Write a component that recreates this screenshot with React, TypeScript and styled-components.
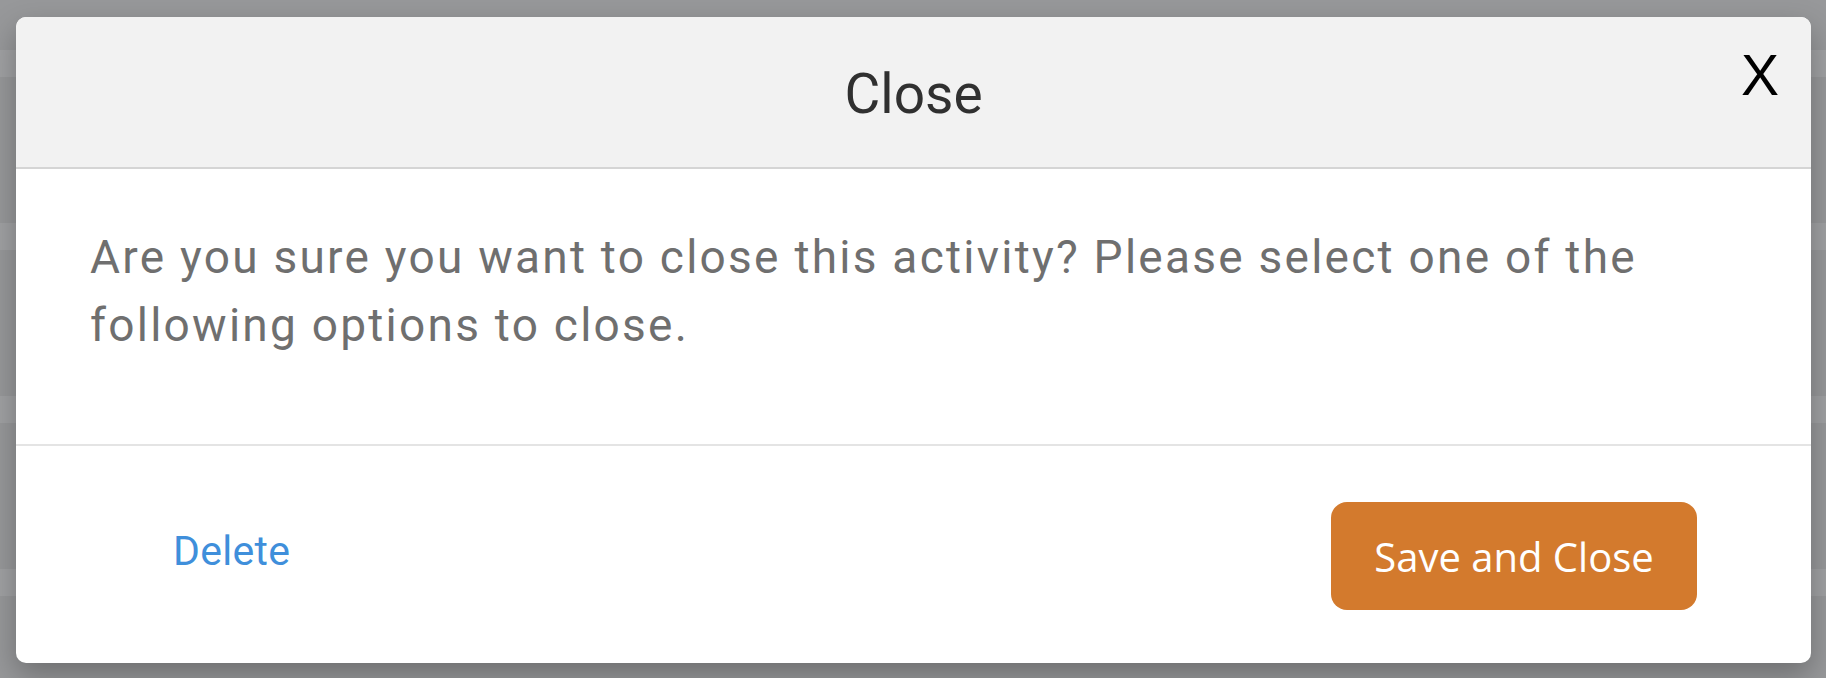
import React from "react";
import styled, { createGlobalStyle } from "styled-components";

const GlobalStyle = createGlobalStyle`
  html, body {
    margin: 0;
    padding: 0;
    height: 100%;
  }
  body {
    background: #97989a;
    font-family: Roboto, "Noto Sans", sans-serif;
  }
  #root {
    height: 100%;
  }
`;

/* Dimmed page behind the modal: faint table rows showing through the overlay */
const Backdrop = styled.div`
  box-sizing: border-box;
  height: 678px;
  padding: 17px 15px 15px 16px;
  background-color: #97989a;
  background-image: repeating-linear-gradient(
    to bottom,
    transparent 0px,
    transparent 50px,
    rgba(255, 255, 255, 0.09) 50px,
    rgba(255, 255, 255, 0.09) 77px,
    transparent 77px,
    transparent 173px
  );
`;

const Dialog = styled.section`
  box-sizing: border-box;
  display: flex;
  flex-direction: column;
  width: 1795px;
  height: 646px;
  background: #ffffff;
  border-radius: 10px;
  overflow: hidden;
  box-shadow: 0 12px 30px rgba(0, 0, 0, 0.28);
`;

const Header = styled.header`
  position: relative;
  display: flex;
  align-items: center;
  justify-content: center;
  height: 150px;
  background: #f2f2f2;
  border-bottom: 2px solid #d5d5d5;
  flex-shrink: 0;
`;

const Title = styled.h2`
  margin: 0;
  font-family: Roboto, sans-serif;
  font-weight: 400;
  font-size: 55px;
  line-height: 1;
  color: #303030;
  transform: translateY(2px);
`;

const CloseButton = styled.button`
  position: absolute;
  top: 30px;
  right: 32px;
  padding: 0;
  border: 0;
  background: none;
  font-family: "Liberation Sans", Arial, sans-serif;
  font-size: 57px;
  line-height: 1;
  color: #000000;
  cursor: pointer;
`;

const Body = styled.div`
  box-sizing: border-box;
  height: 277px;
  padding: 54px 74px 0 74px;
  border-bottom: 2px solid #e4e4e4;
  flex-shrink: 0;
`;

const Message = styled.p`
  margin: 0;
  font-family: Roboto, sans-serif;
  font-size: 46px;
  line-height: 68px;
  letter-spacing: 2.25px;
  color: #6f6f6f;
`;

const Footer = styled.footer`
  flex: 1;
  display: flex;
  align-items: center;
  justify-content: space-between;
  padding: 0 114px 0 157px;
`;

const LinkButton = styled.button`
  padding: 0;
  border: 0;
  background: none;
  font-family: Roboto, sans-serif;
  font-size: 41px;
  line-height: 1;
  letter-spacing: 0.3px;
  color: #3f8fdb;
  cursor: pointer;
  margin-bottom: 6px;
`;

const PrimaryButton = styled.button`
  width: 366px;
  height: 108px;
  border: 0;
  border-radius: 16px;
  background: #d37a2d;
  font-family: "Open Sans", sans-serif;
  font-size: 40px;
  color: #ffffff;
  cursor: pointer;
  margin-top: 3px;
`;

export default function App() {
  return (
    <>
      <GlobalStyle />
      <Backdrop>
        <Dialog role="dialog" aria-labelledby="close-title">
          <Header>
            <Title id="close-title">Close</Title>
            <CloseButton aria-label="Dismiss">X</CloseButton>
          </Header>
          <Body>
            <Message>
              Are you sure you want to close this activity? Please select one
              of the following options to close.
            </Message>
          </Body>
          <Footer>
            <LinkButton>Delete</LinkButton>
            <PrimaryButton>Save and Close</PrimaryButton>
          </Footer>
        </Dialog>
      </Backdrop>
    </>
  );
}
